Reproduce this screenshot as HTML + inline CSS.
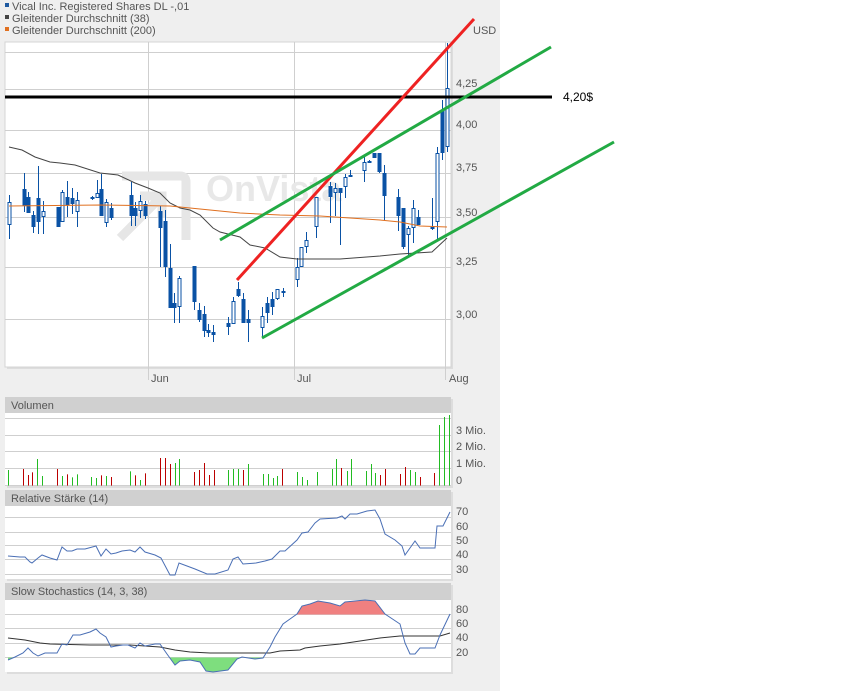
<!DOCTYPE html>
<html><head><meta charset="utf-8"><style>
html,body{margin:0;padding:0;width:850px;height:691px;overflow:hidden;background:#fff;font-family:"Liberation Sans",sans-serif}
</style></head><body>
<svg id="s" width="850" height="691" xmlns="http://www.w3.org/2000/svg" font-family="Liberation Sans, sans-serif">
<rect x="0" y="0" width="500" height="691" fill="#efefef"/>
<!-- legend -->
<rect x="5" y="3" width="4" height="4" fill="#1f5aa0"/>
<text x="12" y="10" font-size="11" fill="#555">Vical Inc. Registered Shares DL -,01</text>
<rect x="5" y="15" width="4" height="4" fill="#444"/>
<text x="12" y="22" font-size="11" fill="#555">Gleitender Durchschnitt (38)</text>
<rect x="5" y="27" width="4" height="4" fill="#e07020"/>
<text x="12" y="34" font-size="11" fill="#555">Gleitender Durchschnitt (200)</text>
<text x="473" y="34" font-size="11" fill="#555">USD</text>
<!-- main box -->
<rect x="7" y="44" width="446" height="325" fill="#ddd"/>
<rect x="5" y="42" width="446" height="325" fill="#fff" stroke="#d4d4d4"/>
<g stroke="#cfcfcf" stroke-width="1">
<line x1="5" y1="52.5" x2="451" y2="52.5"/>
<line x1="5" y1="89.5" x2="451" y2="89.5"/>
<line x1="5" y1="130.5" x2="451" y2="130.5"/>
<line x1="5" y1="173.5" x2="451" y2="173.5"/>
<line x1="5" y1="217.5" x2="451" y2="217.5"/>
<line x1="5" y1="267.5" x2="451" y2="267.5"/>
<line x1="5" y1="319.5" x2="451" y2="319.5"/>
<line x1="148.5" y1="42" x2="148.5" y2="380"/>
<line x1="294.5" y1="42" x2="294.5" y2="380"/>
<line x1="445.5" y1="42" x2="445.5" y2="380"/>
</g>
<g font-size="11" fill="#555">
<text x="456" y="87">4,25</text><text x="456" y="128">4,00</text><text x="456" y="171">3,75</text>
<text x="456" y="216">3,50</text><text x="456" y="265">3,25</text><text x="456" y="318">3,00</text>
<text x="151" y="382">Jun</text><text x="297" y="382">Jul</text><text x="449" y="382">Aug</text>
</g>
<!-- watermark -->
<g fill="none" stroke="#e6e6e6" stroke-width="9">
<path d="M122 176 H180 Q186 176 186 182 V240"/>
<path d="M120 238 L160 198 M140 196 H162 V218"/>
</g>
<text x="206" y="201" font-size="36" font-weight="bold" fill="#e8e8e8">OnVista</text>
<g id="main"></g>
<!-- MAs -->
<polyline fill="none" stroke="#444" stroke-width="1" points="9,147 22,150 35,157 50,162 60,163 75,165 100,173 118,175 135,183 148,188 160,193 170,203 180,208 190,210 200,215 213,228 220,232 240,237 250,245 265,248 280,257 297,259 340,259 380,256 400,254 432,252 447,238"/>
<polyline fill="none" stroke="#e07020" stroke-width="1" points="9,206 100,205 170,206 200,209 240,213 280,215 320,216 350,218 380,220 400,222 420,226 447,227"/>
<!-- trend lines -->
<line x1="5" y1="97" x2="552" y2="97" stroke="#000" stroke-width="3"/>
<text x="563" y="101" font-size="12" fill="#000">4,20$</text>
<line x1="237" y1="280" x2="474" y2="19" stroke="#ee2222" stroke-width="3"/>
<line x1="220" y1="240" x2="551" y2="47" stroke="#22aa44" stroke-width="3"/>
<line x1="262" y1="338" x2="614" y2="142" stroke="#22aa44" stroke-width="3"/>

<!-- Volume -->
<rect x="7" y="399" width="446" height="89" fill="#ddd"/>
<rect x="5" y="397" width="446" height="89" fill="#fff"/>
<rect x="5" y="397" width="446" height="16" fill="#d0d0d0"/>
<text x="11" y="409" font-size="11" fill="#555">Volumen</text>
<g stroke="#cfcfcf"><line x1="5" y1="418.5" x2="451" y2="418.5"/><line x1="5" y1="435.5" x2="451" y2="435.5"/><line x1="5" y1="451.5" x2="451" y2="451.5"/><line x1="5" y1="468.5" x2="451" y2="468.5"/><line x1="5" y1="485.5" x2="451" y2="485.5"/></g>
<g font-size="11" fill="#555"><text x="456" y="434">3 Mio.</text><text x="456" y="450">2 Mio.</text><text x="456" y="467">1 Mio.</text><text x="456" y="484">0</text></g>
<g id="vol"></g>

<!-- RSI -->
<rect x="7" y="492" width="446" height="89" fill="#ddd"/>
<rect x="5" y="490" width="446" height="89" fill="#fff"/>
<rect x="5" y="490" width="446" height="16" fill="#d0d0d0"/>
<text x="11" y="502" font-size="11" fill="#555">Relative Stärke (14)</text>
<g stroke="#cfcfcf"><line x1="5" y1="517.5" x2="451" y2="517.5"/><line x1="5" y1="532.5" x2="451" y2="532.5"/><line x1="5" y1="545.5" x2="451" y2="545.5"/><line x1="5" y1="559.5" x2="451" y2="559.5"/><line x1="5" y1="574.5" x2="451" y2="574.5"/></g>
<g font-size="11" fill="#555"><text x="456" y="515">70</text><text x="456" y="530">60</text><text x="456" y="544">50</text><text x="456" y="558">40</text><text x="456" y="573">30</text></g>
<polyline fill="none" stroke="#4a6fb5" stroke-width="1" points="8,556 20,557 25,557 30,562 32,563 38,558 42,555 50,558 57,560 62,547 67,551 72,551 77,549 85,549 96,546 101,556 106,549 111,554 116,553 122,551 130,550 135,552 140,547 145,552 155,555 161,558 170,575 175,575 179,563 187,566 195,569 207,574 215,574 228,570 233,559 238,557 243,564 256,563 265,561 272,559 280,551 285,551 297,540 302,533 308,532 315,523 320,519 337,518 342,516 345,519 350,514 357,514 367,511 375,510 380,519 385,534 395,540 402,546 405,555 410,548 415,541 420,548 428,548 435,548 437,526 443,526 450,512"/>

<!-- Stoch -->
<rect x="7" y="585" width="446" height="89" fill="#ddd"/>
<rect x="5" y="583" width="446" height="89" fill="#fff"/>
<rect x="5" y="583" width="446" height="16" fill="#d0d0d0"/>
<text x="11" y="595" font-size="11" fill="#555">Slow Stochastics (14, 3, 38)</text>
<g stroke="#cfcfcf"><line x1="5" y1="599.5" x2="451" y2="599.5"/><line x1="5" y1="614.5" x2="451" y2="614.5"/><line x1="5" y1="628.5" x2="451" y2="628.5"/><line x1="5" y1="643.5" x2="451" y2="643.5"/><line x1="5" y1="657.5" x2="451" y2="657.5"/></g>
<g font-size="11" fill="#555"><text x="456" y="613">80</text><text x="456" y="627">60</text><text x="456" y="641">40</text><text x="456" y="656">20</text></g>
<defs>
<clipPath id="ca"><rect x="0" y="590" width="460" height="24.5"/></clipPath>
<clipPath id="cb"><rect x="0" y="657.5" width="460" height="20"/></clipPath>
</defs>
<polygon clip-path="url(#ca)" fill="#f08080" points="8,660 15,657 23,653 28,648 33,653 38,656 45,653 57,653 62,644 67,645 73,635 80,635 90,632 96,629 100,633 106,637 111,647 116,646 123,645 128,645 135,648 140,643 145,646 155,644 160,644 167,654 175,665 180,661 190,660 200,662 206,671 213,672 228,670 237,659 242,657 255,659 263,658 270,647 275,637 283,624 290,619 297,614 302,606 310,604 318,601 330,603 340,606 345,602 355,601 365,600 375,601 385,614 400,624 405,643 410,654 415,654 420,648 435,648 440,635 450,614 450,614.5 8,614.5"/>
<polygon clip-path="url(#cb)" fill="#7ede7e" points="8,660 15,657 23,653 28,648 33,653 38,656 45,653 57,653 62,644 67,645 73,635 80,635 90,632 96,629 100,633 106,637 111,647 116,646 123,645 128,645 135,648 140,643 145,646 155,644 160,644 167,654 175,665 180,661 190,660 200,662 206,671 213,672 228,670 237,659 242,657 255,659 263,658 270,647 275,637 283,624 290,619 297,614 302,606 310,604 318,601 330,603 340,606 345,602 355,601 365,600 375,601 385,614 400,624 405,643 410,654 415,654 420,648 435,648 440,635 450,614 450,657.5 8,657.5"/>
<polyline fill="none" stroke="#333" stroke-width="1" points="8,638 25,640 40,643 50,644 90,645 130,645 160,647 175,650 190,652 210,653 270,653 280,651 300,650 305,648 320,646 340,644 360,641 380,638 400,636 440,636 450,633"/>
<polyline fill="none" stroke="#4a6fb5" stroke-width="1" points="8,660 15,657 23,653 28,648 33,653 38,656 45,653 57,653 62,644 67,645 73,635 80,635 90,632 96,629 100,633 106,637 111,647 116,646 123,645 128,645 135,648 140,643 145,646 155,644 160,644 167,654 175,665 180,661 190,660 200,662 206,671 213,672 228,670 237,659 242,657 255,659 263,658 270,647 275,637 283,624 290,619 297,614 302,606 310,604 318,601 330,603 340,606 345,602 355,601 365,600 375,601 385,614 400,624 405,643 410,654 415,654 420,648 435,648 440,635 450,614"/>
</svg>
<script>
var NS="http://www.w3.org/2000/svg";
function el(p,t,a){var e=document.createElementNS(NS,t);for(var k in a)e.setAttribute(k,a[k]);p.appendChild(e);}
var C=[[9,202,225,195,239,0],[24,189,206,173,212,1],[28,197,213,192,213,1],[33,215,227,211,233,1],[38,198,222,166,234,1],[43,211,217,201,234,0],[58,207,227,207,227,1],[62,192,222,190,222,0],[67,197,205,181,217,1],[72,198,204,188,214,1],[77,200,212,192,227,0],[92,197,199,196,200,1],[97,193,198,180,198,0],[101,189,216,174,216,1],[106,202,223,199,227,0],[111,208,218,203,220,1],[131,195,216,182,226,1],[135,208,216,202,226,1],[140,201,211,195,218,0],[145,204,216,201,219,1],[160,211,228,206,267,1],[165,221,267,210,277,1],[170,268,308,244,308,1],[174,303,308,293,323,1],[179,278,307,276,323,0],[194,266,302,266,310,1],[199,310,320,303,322,1],[204,314,331,306,337,1],[208,330,333,324,337,1],[213,332,335,325,342,1],[228,323,327,317,335,1],[233,301,324,297,324,0],[238,289,296,282,297,1],[243,299,323,293,323,1],[248,319,323,310,342,1],[262,316,328,307,338,0],[267,303,313,297,323,1],[272,299,307,292,315,1],[277,289,299,289,300,0],[283,291,293,288,297,1],[297,267,280,258,287,0],[301,247,267,247,267,0],[306,240,247,232,253,0],[316,197,227,197,238,0],[330,186,197,182,223,1],[335,188,193,183,216,0],[340,188,193,188,245,1],[345,177,187,174,198,0],[350,175,177,170,177,0],[364,162,171,157,182,0],[369,161,163,160,163,0],[374,153,158,153,158,1],[379,153,172,153,173,1],[384,173,196,165,220,1],[398,197,216,189,231,1],[403,208,247,208,249,1],[408,228,235,226,255,0],[413,208,228,200,243,0],[418,217,225,210,225,1],[432,227,229,198,230,1],[437,153,222,147,240,0],[442,110,153,100,160,1],[447,88,147,43,152,0]];
var g=document.getElementById("main"),col="#0a52a5";
C.forEach(function(c){el(g,"line",{x1:c[0]+.5,x2:c[0]+.5,y1:c[3],y2:c[4],stroke:col,"stroke-width":1});
if(c[5])el(g,"rect",{x:c[0]-1.5,y:c[1],width:4,height:Math.max(1,c[2]-c[1]),fill:col});
else el(g,"rect",{x:c[0]-1,y:c[1]+.5,width:3,height:Math.max(1,c[2]-c[1]-1),fill:"#fff",stroke:col,"stroke-width":1});});
var V=[[8,330,1],[23,327,0],[28,345,0],[32,337,0],[37,297,1],[42,348,1],[57,327,0],[62,348,1],[67,343,0],[72,352,1],[77,343,1],[91,351,1],[96,354,1],[101,346,0],[106,348,1],[111,351,0],[130,334,1],[135,346,0],[140,360,1],[145,340,0],[160,294,0],[165,294,0],[170,312,0],[175,309,1],[179,297,1],[194,336,0],[199,330,0],[204,309,0],[209,345,0],[214,330,0],[228,330,1],[233,327,1],[238,327,1],[243,330,0],[248,312,1],[263,342,1],[268,342,1],[273,354,1],[277,348,1],[282,327,0],[297,336,1],[302,351,1],[307,360,1],[317,336,1],[332,327,1],[336,297,1],[341,324,0],[347,333,1],[351,297,1],[366,333,1],[371,312,1],[375,339,1],[380,345,0],[385,327,0],[400,342,0],[405,321,0],[410,330,1],[415,336,1],[420,351,0],[434,339,0],[439,195,1],[444,171,1],[449,165,1]];
var v=document.getElementById("vol");
V.forEach(function(b){el(v,"rect",{x:b[0],y:b[1]/3+360,width:1,height:485.6-(b[1]/3+360),fill:b[2]?"#22bb22":"#bb0000"});});
</script>
</body></html>
